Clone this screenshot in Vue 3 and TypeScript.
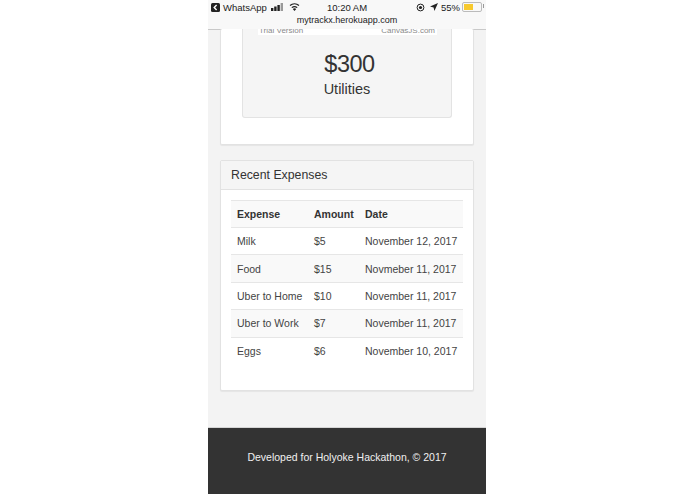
<script setup lang="ts">
interface Expense {
  name: string
  amount: string
  date: string
}

const expenses: Expense[] = [
  { name: 'Milk', amount: '$5', date: 'November 12, 2017' },
  { name: 'Food', amount: '$15', date: 'Novmeber 11, 2017' },
  { name: 'Uber to Home', amount: '$10', date: 'November 11, 2017' },
  { name: 'Uber to Work', amount: '$7', date: 'November 11, 2017' },
  { name: 'Eggs', amount: '$6', date: 'November 10, 2017' },
]
</script>

<template>
  <div class="phone">
    <header class="top-bar">
      <div class="status">
        <div class="status-left">
          <svg class="back" width="9" height="9" viewBox="0 0 9 9">
            <rect width="9" height="9" rx="1.5" fill="#222" />
            <path d="M5.6 2 3.2 4.5 5.6 7" fill="none" stroke="#fff" stroke-width="1.4" />
          </svg>
          <span>WhatsApp</span>
          <svg class="signal" width="14" height="8" viewBox="0 0 14 8">
            <rect x="0" y="5" width="2.4" height="3" fill="#222" />
            <rect x="3.2" y="3.5" width="2.4" height="4.5" fill="#222" />
            <rect x="6.4" y="2" width="2.4" height="6" fill="#222" />
            <rect x="9.6" y="0" width="2.4" height="8" fill="#999" />
          </svg>
          <svg class="wifi" width="11" height="8" viewBox="0 0 11 8">
            <path d="M5.5 8 3.8 5.9a2.7 2.7 0 0 1 3.4 0Z" fill="#222" />
            <path d="M2.8 4.6a4.3 4.3 0 0 1 5.4 0M1 2.5a7 7 0 0 1 9 0" fill="none" stroke="#222" stroke-width="1.2" />
          </svg>
        </div>
        <span class="clock">10:20 AM</span>
        <div class="status-right">
          <svg width="9" height="9" viewBox="0 0 9 9">
            <circle cx="4.5" cy="4.5" r="3.4" fill="none" stroke="#222" />
            <circle cx="4.5" cy="4.5" r="1.6" fill="#222" />
          </svg>
          <svg class="arrow" width="8" height="8" viewBox="0 0 8 8">
            <path d="M8 0 0 3.6l3.6.8L4.4 8Z" fill="#222" />
          </svg>
          <span>55%</span>
          <div class="battery"><div class="charge"></div></div>
        </div>
      </div>
      <div class="address">mytrackx.herokuapp.com</div>
    </header>

    <main class="content">
      <section class="card chart-card">
        <div class="chart-box">
          <div class="canvas-strip">
            <span>Trial Version</span>
            <span>CanvasJS.com</span>
          </div>
          <div class="total">$300</div>
          <div class="category">Utilities</div>
        </div>
      </section>

      <section class="card">
        <h2 class="card-title">Recent Expenses</h2>
        <div class="card-body">
          <table class="expense-table">
            <colgroup>
              <col class="col-name" />
              <col class="col-amount" />
              <col />
            </colgroup>
            <thead>
              <tr>
                <th>Expense</th>
                <th>Amount</th>
                <th>Date</th>
              </tr>
            </thead>
            <tbody>
              <tr v-for="expense in expenses" :key="expense.name">
                <td>{{ expense.name }}</td>
                <td>{{ expense.amount }}</td>
                <td>{{ expense.date }}</td>
              </tr>
            </tbody>
          </table>
        </div>
      </section>
    </main>

    <footer class="footer">Developed for Holyoke Hackathon, © 2017</footer>
  </div>
</template>

<style>
html,
body {
  margin: 0;
  background: #fff;
}
</style>

<style scoped>
.phone {
  display: flex;
  flex-direction: column;
  width: 278px;
  height: 494px;
  margin-left: 208px;
  overflow: hidden;
  background: #f3f3f3;
  color: #333;
  font-family: 'Liberation Sans', Arial, sans-serif;
}

.top-bar {
  flex: none;
  height: 30px;
  box-sizing: border-box;
  padding: 0 3px;
  border-bottom: 1px solid #c9c9c9;
  background: #f8f8f8;
  color: #222;
}

.status {
  display: grid;
  grid-template-columns: 1fr auto 1fr;
  align-items: center;
  height: 14px;
  font-size: 9.5px;
}

.status-left,
.status-right {
  display: flex;
  align-items: center;
}

.status-right {
  justify-content: flex-end;
}

.back {
  margin-right: 3px;
}

.signal {
  margin-left: 4px;
}

.wifi {
  margin-left: 4px;
}

.clock {
  font-size: 9.5px;
}

.arrow {
  margin: 0 3px 0 5px;
}

.battery {
  position: relative;
  width: 16px;
  height: 6px;
  margin: 0 1px 0 2px;
  padding: 1px;
  border: 1px solid #bbb;
  border-radius: 2px;
}

.battery::after {
  content: '';
  position: absolute;
  top: 1px;
  right: -3px;
  width: 1px;
  height: 4px;
  background: #999;
}

.charge {
  width: 9px;
  height: 100%;
  background: #f7c92e;
}

.address {
  font-size: 9px;
  line-height: 12px;
  text-align: center;
}

.content {
  flex: 1;
  display: flex;
  flex-direction: column;
  gap: 15px;
  padding: 0 12px;
}

.card {
  border: 1px solid #e2e2e2;
  border-radius: 2px;
  background: #fff;
  box-shadow: 0 1px 1px rgba(0, 0, 0, 0.06);
}

.chart-card {
  height: 116px;
  box-sizing: border-box;
  margin-top: -1px;
  padding: 0 21px;
  border-top: 0;
}

.chart-box {
  height: 89px;
  box-sizing: border-box;
  border: 1px solid #e3e3e3;
  border-top: 0;
  border-radius: 0 0 3px 3px;
  background: #f5f5f5;
  text-align: center;
}

.canvas-strip {
  display: flex;
  justify-content: space-between;
  height: 6px;
  margin: 0 14px 0 15px;
  padding: 0 2px 0 1px;
  overflow: hidden;
  background: #fff;
  color: #8a8a8a;
  font-size: 8px;
  line-height: 3px;
}

.total {
  margin-top: 13px;
  padding-left: 5px;
  font-size: 23.5px;
  letter-spacing: -0.5px;
  line-height: 32px;
}

.category {
  font-size: 14.5px;
  line-height: 19px;
}

.card-title {
  margin: 0;
  padding: 0 10px;
  height: 28px;
  border-bottom: 1px solid #e2e2e2;
  background: #f5f5f5;
  font-size: 12.3px;
  font-weight: 400;
  line-height: 28px;
}

.card-body {
  padding: 10px 10px 26px;
}

.expense-table {
  width: 100%;
  border-collapse: collapse;
  table-layout: fixed;
  color: #444;
  font-size: 10.5px;
}

.col-name {
  width: 77px;
}

.col-amount {
  width: 51px;
}

.expense-table th,
.expense-table td {
  height: 27.4px;
  box-sizing: border-box;
  padding: 0 6px;
  border-top: 1px solid #e6e6e6;
  text-align: left;
  white-space: nowrap;
}

.expense-table th {
  height: 27px;
  border-bottom: 1px solid #e6e6e6;
  color: #333;
  font-weight: 700;
}

.expense-table thead tr,
.expense-table tbody tr:nth-child(even) {
  background: #f9f9f9;
}

.footer {
  flex: none;
  height: 67px;
  padding-top: 22px;
  box-sizing: border-box;
  border-top: 1px solid #d5d5d5;
  background: #333;
  color: #f0f0f0;
  font-size: 10.5px;
  line-height: 14px;
  text-align: center;
}
</style>
